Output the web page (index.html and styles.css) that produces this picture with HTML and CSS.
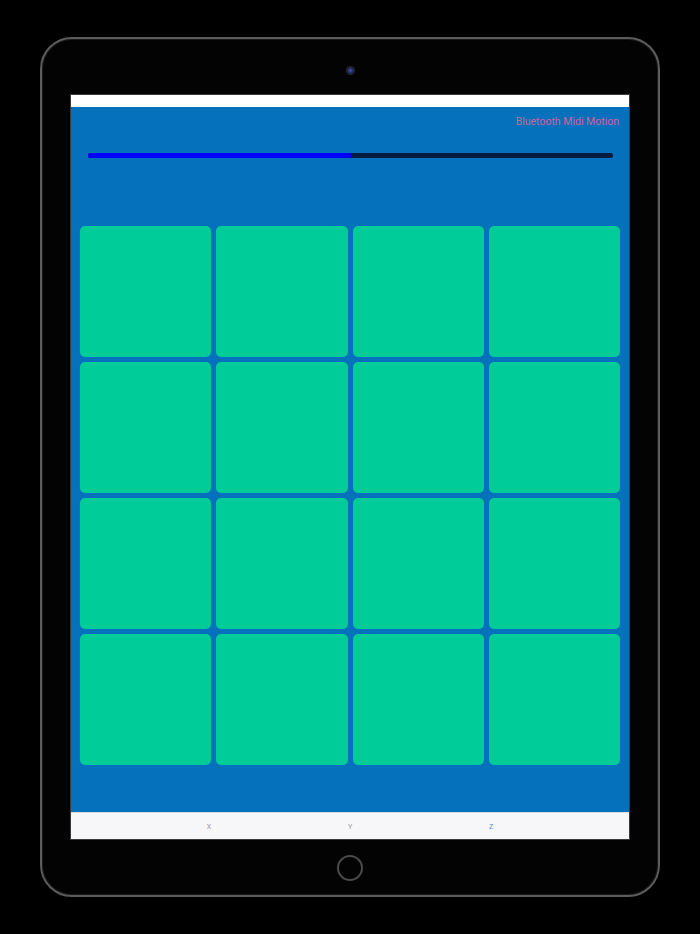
FILE: index.html
```html
<!DOCTYPE html>
<html lang="en">
<head>
    <meta charset="UTF-8">
    <meta name="viewport" content="width=device-width, initial-scale=1.0">
    <title>Bluetooth Midi Motion</title>
    <link rel="stylesheet" href="styles.css">
</head>
<body>
    <div class="device">
        <!-- Top bezel with camera -->
        <div class="bezel-top">
            <div class="camera"></div>
        </div>

        <div class="screen">
            <div class="status-bar"></div>

            <div class="app">
                <div class="app-title">Bluetooth Midi Motion</div>

                <!-- Progress -->
                <div class="progress">
                    <div class="progress-fill" style="width: 50%"></div>
                </div>

                <!-- Pads -->
                <div class="pad-grid">
                    <div class="pad"></div>
                    <div class="pad"></div>
                    <div class="pad"></div>
                    <div class="pad"></div>
                    <div class="pad"></div>
                    <div class="pad"></div>
                    <div class="pad"></div>
                    <div class="pad"></div>
                    <div class="pad"></div>
                    <div class="pad"></div>
                    <div class="pad"></div>
                    <div class="pad"></div>
                    <div class="pad"></div>
                    <div class="pad"></div>
                    <div class="pad"></div>
                    <div class="pad"></div>
                </div>
            </div>

            <!-- Tab bar -->
            <div class="tab-bar">
                <div class="tab">X</div>
                <div class="tab">Y</div>
                <div class="tab active">Z</div>
            </div>
        </div>

        <!-- Bottom bezel with home button -->
        <div class="bezel-bottom">
            <div class="home-button"></div>
        </div>
    </div>
</body>
</html>
```

FILE: styles.css
```css
body {
    margin: 0;
    padding: 37px 40px;
    background: #000;
    font-family: Roboto, "Liberation Sans", sans-serif;
}

.device {
    width: 620px;
    height: 860px;
    box-sizing: border-box;
    border: 2px solid #5c5c5c;
    border-radius: 32px;
    background: #030303;
    display: flex;
    flex-direction: column;
    align-items: center;
    box-shadow: inset 0 0 0 1px #1a1a1a;
}

.bezel-top {
    height: 55px;
    display: flex;
    justify-content: center;
    align-items: center;
    box-sizing: border-box;
}

.camera {
    width: 7px;
    height: 7px;
    border-radius: 50%;
    background: radial-gradient(circle, #4a4fa8 0%, #23265a 55%, #111 100%);
    box-shadow: 0 0 0 1px #2a2a2a;
    margin-top: 8px;
}

.screen {
    width: 560px;
    height: 746px;
    box-sizing: border-box;
    border: 1px solid #3a3a3a;
    display: flex;
    flex-direction: column;
}

.status-bar {
    height: 12px;
    background: #fff;
}

.app {
    flex: 1;
    background: #0570bb;
    padding: 8px 9px 0 9px;
    display: flex;
    flex-direction: column;
}

.app-title {
    text-align: right;
    font-size: 10.5px;
    line-height: 14px;
    color: #d2619f;
    padding-right: 1px;
}

.progress {
    margin: 24px 7px 0 8px;
    height: 5px;
    border-radius: 3px;
    background: #041c3f;
    overflow: hidden;
}

.progress-fill {
    height: 100%;
    background: #0000ff;
    margin-right: 3px;
}

.pad-grid {
    margin-top: 68px;
    display: grid;
    grid-template-columns: repeat(4, 1fr);
    gap: 5px;
}

.pad {
    height: 131px;
    background: #00cc99;
    border-radius: 5px;
}

.tab-bar {
    height: 27px;
    background: #f7f7f9;
    border-top: 1px solid #d6dbe2;
    box-sizing: border-box;
    display: flex;
    justify-content: center;
    align-items: center;
}

.tab {
    width: 141px;
    text-align: center;
    font-size: 7px;
    color: #9a9a9a;
    padding-top: 1px;
}

.tab.active {
    color: #4a8fd8;
}

.bezel-bottom {
    flex: 1;
    display: flex;
    justify-content: center;
    align-items: center;
}

.home-button {
    width: 26px;
    height: 26px;
    border-radius: 50%;
    border: 2px solid #4a4a4a;
    box-sizing: border-box;
}
```
